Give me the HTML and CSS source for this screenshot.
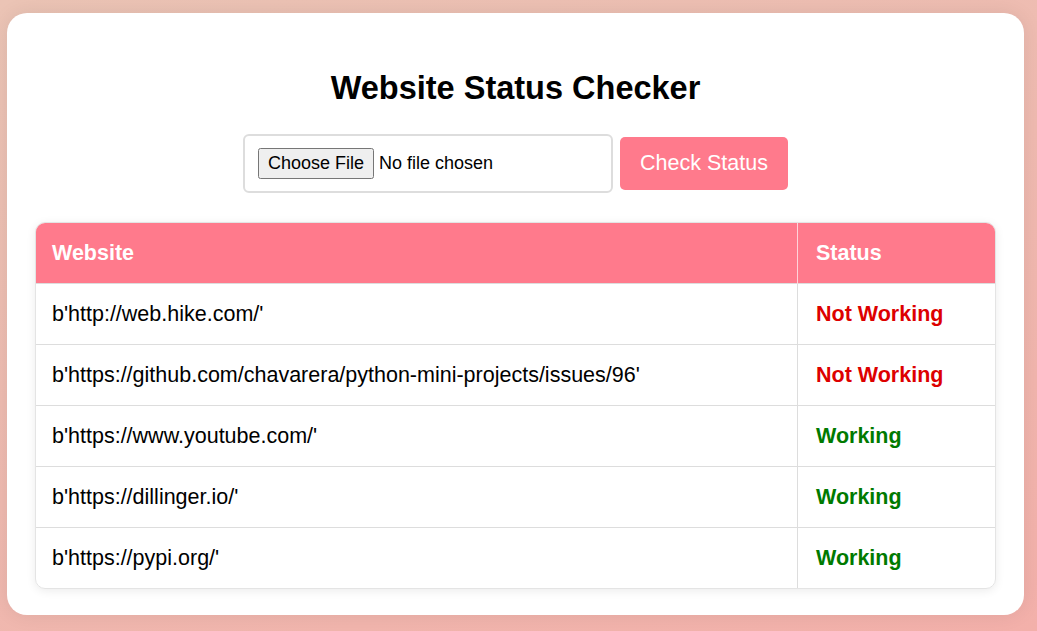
FILE: index.html
```html
<!DOCTYPE html>
<html lang="en">
<head>
<meta charset="utf-8">
<title>Website Status Checker</title>
<link rel="stylesheet" href="styles.css">
</head>
<body>
<div class="container">
  <h1 class="title">Website Status Checker</h1>
  <form class="upload-form" onsubmit="return false;">
    <div class="file-box"><input type="file" class="file-input"></div>
    <button type="submit" class="check-btn">Check Status</button>
  </form>
  <div class="table-wrap">
    <table class="status-table">
      <thead>
        <tr><th class="col-site">Website</th><th class="col-status">Status</th></tr>
      </thead>
      <tbody>
        <tr><td class="col-site">b'http://web.hike.com/'</td><td class="col-status bad">Not Working</td></tr>
        <tr><td class="col-site">b'https://github.com/chavarera/python-mini-projects/issues/96'</td><td class="col-status bad">Not Working</td></tr>
        <tr><td class="col-site">b'https://www.youtube.com/'</td><td class="col-status good">Working</td></tr>
        <tr><td class="col-site">b'https://dillinger.io/'</td><td class="col-status good">Working</td></tr>
        <tr><td class="col-site">b'https://pypi.org/'</td><td class="col-status good">Working</td></tr>
      </tbody>
    </table>
  </div>
</div>
</body>
</html>
```
FILE: styles.css
```css
html, body {
  margin: 0;
  height: 100%;
}
body {
  box-sizing: border-box;
  padding: 13px 13px 0 7px;
  background: linear-gradient(160deg, #ebc4b5 0%, #efbab0 50%, #f3b0aa 100%);
  font-family: "Liberation Sans", Arial, sans-serif;
  color: #000;
  overflow: hidden;
}
.container {
  box-sizing: border-box;
  height: 602px;
  background: #fff;
  border-radius: 20px;
  padding: 28px;
  box-shadow: 0 0 20px rgba(0, 0, 0, 0.08);
}
.title {
  margin: 29px 0 30px;
  text-align: center;
  font-size: 32.5px;
  line-height: 36px;
  font-weight: bold;
}
.upload-form {
  display: flex;
  justify-content: center;
  align-items: center;
  gap: 7px;
  margin: -2px 0 29px;
}
.file-box {
  box-sizing: border-box;
  width: 370px;
  height: 59px;
  border: 2px solid #ddd;
  border-radius: 6px;
  padding: 0 13px;
  display: flex;
  align-items: center;
}
.file-input {
  font-family: "Liberation Sans", Arial, sans-serif;
  font-size: 18px;
}
.file-input::file-selector-button {
  font-family: "Liberation Sans", Arial, sans-serif;
  font-size: 18px;
  padding: 3px 8px;
  margin-right: 5px;
}
.check-btn {
  box-sizing: border-box;
  height: 53px;
  width: 168px;
  border: none;
  border-radius: 5px;
  background: #ff7a8c;
  color: #fff;
  font-family: "Liberation Sans", Arial, sans-serif;
  font-size: 21.5px;
  padding: 0;
}
.table-wrap {
  border-radius: 10px;
  overflow: hidden;
  border: 1px solid #e4e4e4;
  box-shadow: 0 2px 10px rgba(0, 0, 0, 0.08);
}
.status-table {
  width: 100%;
  border-collapse: collapse;
  font-size: 21.5px;
}
.status-table th,
.status-table td {
  text-align: left;
  padding: 18px 16px;
  line-height: 24px;
}
.status-table th {
  background: #ff7a8c;
  color: #fff;
  font-weight: bold;
}
.status-table td {
  border-top: 1px solid #ddd;
}
.status-table .col-site {
  border-right: 1px solid #ddd;
}
.status-table th.col-site {
  border-right-color: #ffd3d9;
}
.status-table .col-status {
  width: 163px;
  padding-left: 18px;
}
.bad {
  color: #dd0000;
  font-weight: bold;
}
.good {
  color: #007a00;
  font-weight: bold;
}
```
